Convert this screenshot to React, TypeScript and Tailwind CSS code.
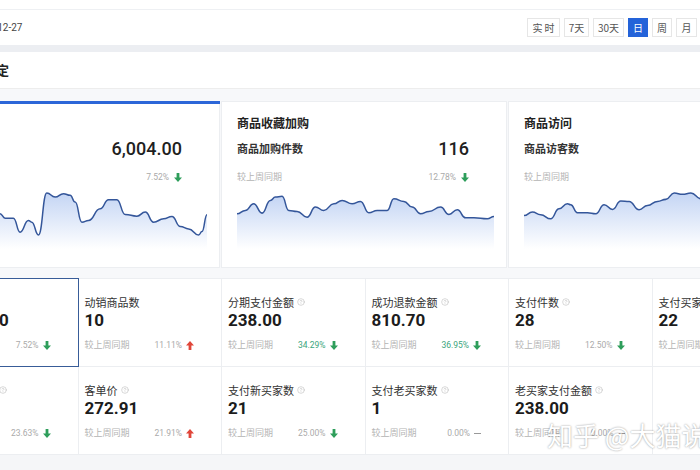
import { CircleHelp } from "lucide-react"

const CJK = "font-['Noto_Sans_CJK_SC','Noto_Sans',sans-serif]"
const NUM = "font-['Roboto','Noto_Sans_CJK_SC',sans-serif]"

type Pt = [number, number]

const card1: Pt[] = [
  [-150, 345], [-125, 330], [-100, 352], [-75, 362], [-50, 340], [-25, 348], [0, 355],
  [15, 368], [40, 368], [60, 410], [85, 375], [95, 380], [115, 418], [140, 293], [165, 305],
  [190, 295], [210, 300], [225, 320], [245, 380], [265, 375], [300, 340], [325, 313], [350, 313],
  [375, 357], [410, 362], [435, 350], [460, 380], [490, 370], [515, 363], [540, 393], [565, 400],
  [595, 418], [605, 408], [620, 358],
]

const card2: Pt[] = [
  [50, 355], [75, 345], [100, 325], [125, 353], [150, 315], [165, 305], [185, 303], [205, 345],
  [230, 348], [260, 365], [285, 335], [310, 345], [340, 325], [365, 315], [395, 325], [420, 318],
  [445, 352], [470, 345], [500, 345], [520, 310], [550, 318], [575, 335], [600, 355], [625, 348],
  [660, 335], [685, 357], [710, 343], [735, 367], [760, 367], [800, 370], [820, 363],
]

const card3: Pt[] = [
  [70, 360], [95, 350], [120, 358], [150, 370], [175, 340], [200, 325], [210, 328], [230, 352],
  [260, 352], [285, 355], [310, 328], [335, 342], [360, 317], [385, 318], [415, 343], [440, 330],
  [470, 318], [495, 312], [520, 293], [545, 297], [570, 293], [600, 310], [630, 320], [660, 305],
  [690, 300], [720, 322], [750, 332], [780, 312], [810, 320], [840, 315],
]

function smooth(pts: Pt[]) {
  let d = `M${pts[0][0]} ${pts[0][1]}`
  for (let i = 1; i < pts.length; i++) {
    const [x0, y0] = pts[i - 1]
    const [x1, y1] = pts[i]
    const mx = (x0 + x1) / 2
    d += ` C${mx} ${y0} ${mx} ${y1} ${x1} ${y1}`
  }
  return d
}

function Chart({ id, pts }: { id: string; pts: Pt[] }) {
  const line = smooth(pts)
  const x0 = pts[0][0]
  const x1 = pts[pts.length - 1][0]
  return (
    <svg
      width={257}
      height={57}
      viewBox={`${x0} 290 770 170`}
      preserveAspectRatio="none"
      className="block"
    >
      <defs>
        <linearGradient id={id} x1="0" y1="0" x2="0" y2="1">
          <stop offset="0" stopColor="#c4d5f4" />
          <stop offset="1" stopColor="#ffffff" />
        </linearGradient>
      </defs>
      <path d={`${line} L${x1} 460 L${x0} 460 Z`} fill={`url(#${id})`} />
      <path d={line} fill="none" stroke="#34569a" strokeWidth={4.5} />
    </svg>
  )
}

function Arrow({ up }: { up?: boolean }) {
  return (
    <svg width="8" height="9" viewBox="0 0 8 9" className={up ? "rotate-180" : ""}>
      <path d="M2.6 0h2.8v4.6H8L4 9 0 4.6h2.6z" fill={up ? "#e0463a" : "#2e9e5b"} />
    </svg>
  )
}

function TrendCard({
  id, title, label, value, pct, pts, active,
}: { id: string; title: string; label: string; value: string; pct: string; pts: Pt[]; active?: boolean }) {
  return (
    <div className="relative w-[286px] h-[167px] shrink-0 bg-white border border-[#eceef1] pl-[15px]">
      {active && <div className="absolute -left-px -right-px -top-px h-[3px] bg-[#2c66d8]" />}
      <div className="pr-[37px]">
        <p className="mt-[13px] text-[12px] leading-4 font-semibold text-[#222]">{title}</p>
        <div className="mt-[6px] h-[22px] flex items-center justify-between">
          <span className="text-[11px] font-semibold text-[#333]">{label}</span>
          <span className={`${NUM} text-[18px] font-medium text-[#1f1f1f]`}>{value}</span>
        </div>
        <div className="mt-[11px] h-[14px] flex items-center justify-between">
          <span className="text-[9px] text-[#b4b4b4]">较上周同期</span>
          <span className="flex items-center gap-[5px]">
            <span className={`${NUM} text-[8.5px] text-[#aaa]`}>{pct}</span>
            <Arrow />
          </span>
        </div>
      </div>
      <div className="mt-[8px]">
        <Chart id={id} pts={pts} />
      </div>
    </div>
  )
}

type Cell = {
  label: string
  value: string
  pct: string
  help?: boolean
  dir?: "up" | "down" | "flat"
  tint?: boolean
  selected?: boolean
}

const cells: (Cell | null)[] = [
  { label: "支付金额", value: "6,004.00", pct: "7.52%", dir: "down", selected: true },
  { label: "动销商品数", value: "10", pct: "11.11%", dir: "up" },
  { label: "分期支付金额", value: "238.00", pct: "34.29%", help: true, dir: "down", tint: true },
  { label: "成功退款金额", value: "810.70", pct: "36.95%", help: true, dir: "down", tint: true },
  { label: "支付件数", value: "28", pct: "12.50%", help: true, dir: "down" },
  { label: "支付买家数", value: "22", pct: "4.35%", help: true, dir: "down" },
  { label: "支付转化率", value: "6.05%", pct: "23.63%", help: true, dir: "down" },
  { label: "客单价", value: "272.91", pct: "21.91%", help: true, dir: "up" },
  { label: "支付新买家数", value: "21", pct: "25.00%", help: true, dir: "down" },
  { label: "支付老买家数", value: "1", pct: "0.00%", help: true, dir: "flat" },
  { label: "老买家支付金额", value: "238.00", pct: "0.00%", help: true, dir: "flat" },
  null,
]

function MetricCell({ c }: { c: Cell | null }) {
  return (
    <div className="relative h-[88px] bg-white border-r border-b border-[#eceef1] pl-[6px] pr-[27px]">
      {c && (
        <>
          {c.selected && (
            <div className="absolute -inset-px border-[1.5px] border-[#385c98] z-10" />
          )}
          <div className="pt-[16px] h-[30px] flex items-center gap-[3px] text-[11px] text-[#333]">
            <span>{c.label}</span>
            {c.help && <CircleHelp size={8} strokeWidth={1.6} color="#b8b8b8" />}
          </div>
          <p className={`${NUM} text-[17px] leading-[22px] font-bold text-[#1c1c1c]`}>{c.value}</p>
          <div className="mt-[8px] h-[12px] flex items-center justify-between">
            <span className="text-[9px] text-[#b4b4b4]">较上周同期</span>
            <span className="flex items-center gap-[4px]">
              <span className={`${NUM} text-[8.5px] ${c.tint ? "text-[#3aa57c]" : "text-[#aaa]"}`}>
                {c.pct}
              </span>
              {c.dir === "flat" ? (
                <span className="w-[7px] h-px bg-[#999]" />
              ) : (
                <Arrow up={c.dir === "up"} />
              )}
            </span>
          </div>
        </>
      )}
    </div>
  )
}

const ranges = [
  { t: "实 时", w: "w-[33px]" },
  { t: "7天", w: "w-[25px]" },
  { t: "30天", w: "w-[31px]" },
  { t: "日", w: "w-[20px]" },
  { t: "周", w: "w-[20px]" },
  { t: "月", w: "w-[21px]" },
]

export default function App() {
  return (
    <div className={`relative w-[700px] h-[470px] overflow-hidden bg-[#f5f6f8] ${CJK}`}>
      {/* TOP BAR */}
      <div className="h-[10px] bg-white border-b border-[#eef0f3]" />
      <div className="h-[35px] bg-white flex items-center justify-between pr-[3px]">
        <span className={`${NUM} -ml-[28px] text-[10px] text-[#444]`}>2020-12-27</span>
        <div className="flex gap-[4px]">
          {ranges.map((r) => (
            <button
              key={r.t}
              className={`h-[19px] ${r.w} text-[10px] leading-none border ${
                r.t === "日"
                  ? "bg-[#2463d9] border-[#2463d9] text-white"
                  : "bg-white border-[#e6e6e6] text-[#555]"
              }`}
            >
              {r.t}
            </button>
          ))}
        </div>
      </div>
      <div className="h-[7px] bg-[#eceef2]" />

      {/* SECTION HEADER */}
      <div className="h-[37px] bg-white border-b border-[#ededed] flex items-center">
        <span className="-ml-[43px] text-[13px] font-semibold text-[#222]">指标设定</span>
      </div>

      {/* CONTENT */}
      <div className="-ml-[66px] pt-[12px] bg-[#f7f8fa]">
        <div className="flex gap-px">
          <TrendCard id="g1" active title="支付" label="支付金额" value="6,004.00" pct="7.52%" pts={card1} />
          <TrendCard id="g2" title="商品收藏加购" label="商品加购件数" value="116" pct="12.78%" pts={card2} />
          <TrendCard id="g3" title="商品访问" label="商品访客数" value="462" pct="3.14%" pts={card3} />
        </div>

        <div className="mt-[10px] grid grid-cols-[repeat(6,143.5px)] border-t border-l border-[#eceef1]">
          {cells.map((c, i) => (
            <MetricCell key={i} c={c} />
          ))}
        </div>
      </div>

      {/* WATERMARK */}
      <div className="absolute left-[547px] top-[420px] text-[26px] leading-[30px] text-white whitespace-nowrap [text-shadow:0_0_2px_rgba(0,0,0,0.45)]">
        知乎 @大猫说
      </div>
    </div>
  )
}
